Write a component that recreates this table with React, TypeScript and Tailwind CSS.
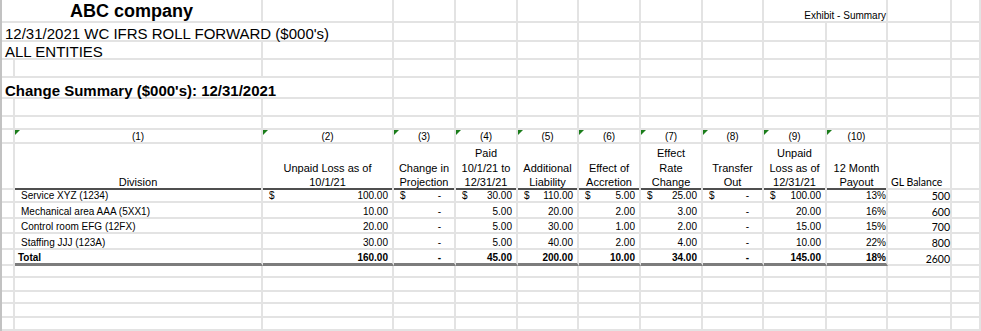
import type { ReactNode } from "react";

// Spreadsheet export of the Q4 change summary. Column widths / row heights follow the sheet.
const COLS =
  "grid grid-cols-[13px_248px_131px_62px_62px_61px_62px_62px_61px_63px_61px_64px_29px]";

type Bottom = "grid" | "dark" | "total";

const BOTTOM: Record<Bottom, string> = {
  grid: "border-b-2 border-b-[#e3e3e3]",
  dark: "border-b-2 border-b-[#4f4f4f]",
  total: "border-b-[3px] border-b-[#7c7c7c]",
};

function Cell({
  className = "",
  bottom = "grid",
  children,
}: {
  className?: string;
  bottom?: Bottom;
  children?: ReactNode;
}) {
  return (
    <div className={`relative flex min-w-0 items-end border-r-2 border-r-[#e3e3e3] ${BOTTOM[bottom]} ${className}`}>
      {children}
    </div>
  );
}

function Blank({ n }: { n: number }) {
  return (
    <>
      {Array.from({ length: n }).map((_, i) => (
        <Cell key={i} />
      ))}
    </>
  );
}

function Row({ h, children }: { h: string; children: ReactNode }) {
  return <div className={`${COLS} ${h}`}>{children}</div>;
}

// little green "number stored as text" flag in the corner
function Flag() {
  return (
    <span className="absolute left-0 top-0 h-0 w-0 border-r-[5px] border-t-[5px] border-r-transparent border-t-[#1b7d1b]" />
  );
}

const HEADERS: string[][] = [
  ["Division"],
  ["Unpaid Loss as of", "10/1/21"],
  ["Change in", "Projection"],
  ["Paid", "10/1/21 to", "12/31/21"],
  ["Additional", "Liability"],
  ["Effect of", "Accretion"],
  ["Effect", "Rate", "Change"],
  ["Transfer", "Out"],
  ["Unpaid", "Loss as of", "12/31/21"],
  ["12 Month", "Payout"],
];

type Line = {
  name: string;
  amounts: (string | null)[]; // C..J, null = "-"
  payout: string;
  gl: string;
};

const LINES: Line[] = [
  { name: "Service XYZ (1234)", amounts: ["100.00", null, "30.00", "110.00", "5.00", "25.00", null, "100.00"], payout: "13%", gl: "500" },
  { name: "Mechanical area AAA (5XX1)", amounts: ["10.00", null, "5.00", "20.00", "2.00", "3.00", null, "20.00"], payout: "16%", gl: "600" },
  { name: "Control room EFG (12FX)", amounts: ["20.00", null, "5.00", "30.00", "1.00", "2.00", null, "15.00"], payout: "15%", gl: "700" },
  { name: "Staffing JJJ (123A)", amounts: ["30.00", null, "5.00", "40.00", "2.00", "4.00", null, "10.00"], payout: "22%", gl: "800" },
];

const TOTAL: Line = {
  name: "Total",
  amounts: ["160.00", null, "45.00", "200.00", "10.00", "34.00", null, "145.00"],
  payout: "18%",
  gl: "2600",
};

function Amount({ value, dollar, bold, bottom }: { value: string | null; dollar: boolean; bold: boolean; bottom: Bottom }) {
  return (
    <Cell
      bottom={bottom}
      className={`justify-between pl-[6px] text-[10px] leading-[10px] ${value ? "pr-[4px]" : "pr-[13px]"} ${bold ? "font-bold" : ""}`}
    >
      <span>{dollar ? "$" : ""}</span>
      <span>{value ?? "-"}</span>
    </Cell>
  );
}

function DataRow({ line, first, total, h }: { line: Line; first?: boolean; total?: boolean; h: string }) {
  const bottom: Bottom = total ? "total" : "grid";
  return (
    <Row h={h}>
      <Cell />
      <Cell
        bottom={bottom}
        className={`whitespace-nowrap text-[10px] leading-[10px] ${total ? "pl-[3px] font-bold" : "pl-[6px]"}`}
      >
        {line.name}
      </Cell>
      {line.amounts.map((a, i) => (
        <Amount key={i} value={a} dollar={!!first} bold={!!total} bottom={bottom} />
      ))}
      <Cell bottom={bottom} className={`justify-end text-[10px] leading-[10px] ${total ? "font-bold" : ""}`}>
        {line.payout}
      </Cell>
      <Cell className="justify-end font-['Lato',sans-serif] text-[10.5px] leading-[10px]">{line.gl}</Cell>
      <Cell />
    </Row>
  );
}

export default function App() {
  return (
    <div className="h-[331px] w-[981px] overflow-hidden border-l-2 border-l-[#c2c2c2] bg-white font-['Liberation_Sans',Arial,sans-serif] text-black">
      <Row h="h-[23px]">
        <Cell className="col-span-2 justify-center text-[18px] font-bold leading-[20px]">ABC company</Cell>
        <Blank n={7} />
        <Cell className="col-span-2 justify-end text-[10px] leading-[10px]">Exhibit - Summary</Cell>
        <Blank n={2} />
      </Row>
      <Row h="h-[19px]">
        <Cell className="col-span-3 whitespace-nowrap pl-[3px] text-[15px] leading-[13px]">
          12/31/2021 WC IFRS ROLL FORWARD ($000's)
        </Cell>
        <Blank n={10} />
      </Row>
      <Row h="h-[18px]">
        <Cell className="col-span-2 pl-[3px] text-[15px] leading-[13px]">ALL ENTITIES</Cell>
        <Blank n={11} />
      </Row>
      <Row h="h-[18px]">
        <Blank n={13} />
      </Row>
      <Row h="h-[21px]">
        <Cell className="col-span-3 whitespace-nowrap pl-[3px] text-[15px] font-bold leading-[13px]">
          Change Summary ($000's): 12/31/2021
        </Cell>
        <Blank n={10} />
      </Row>
      <Row h="h-[18px]">
        <Blank n={13} />
      </Row>
      <Row h="h-[13px]">
        <Blank n={13} />
      </Row>

      {/* column numbers */}
      <Row h="h-[14px]">
        <Cell />
        {HEADERS.map((_, i) => (
          <Cell key={i} className="justify-center text-[10px] leading-[10px]">
            <Flag />({i + 1})
          </Cell>
        ))}
        <Blank n={2} />
      </Row>

      {/* column titles */}
      <Row h="h-[44px]">
        <Cell />
        {HEADERS.map((lines, i) => (
          <Cell key={i} bottom="dark" className="justify-center">
            <div className="translate-y-[2px] whitespace-nowrap text-center text-[11px] leading-[14.5px]">
              {lines.map((l) => (
                <div key={l}>{l}</div>
              ))}
            </div>
          </Cell>
        ))}
        <Cell className="pl-[3px] font-['Lato',sans-serif] text-[10.5px] leading-[12px]">GL Balance</Cell>
        <Cell />
      </Row>

      {LINES.map((line, i) => (
        <DataRow key={line.name} line={line} first={i === 0} h={i % 2 === 0 ? "h-[15px]" : "h-[16px]"} />
      ))}
      <DataRow line={TOTAL} total h="h-[16px]" />

      {["h-[12px]", "h-[14px]", "h-[12px]", "h-[14px]", "h-[13px]", "h-[13px]"].map((h, i) => (
        <Row key={i} h={h}>
          <Blank n={13} />
        </Row>
      ))}
    </div>
  );
}
